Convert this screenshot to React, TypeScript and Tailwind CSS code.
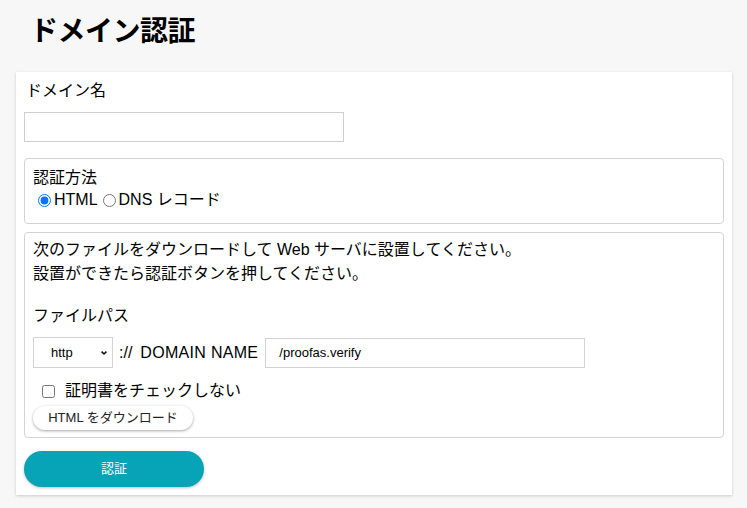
import { useState } from 'react';

const font = { fontFamily: '"Liberation Sans", "Noto Sans CJK JP", sans-serif' };

export default function App() {
  const [method, setMethod] = useState<'html' | 'dns'>('html');

  return (
    <div className="min-h-[508px] w-[747px] bg-[#f7f7f7] text-black" style={font}>
      <h1 className="pl-[30px] pt-[15px] pb-[23px] text-[28px] font-bold leading-[34px] tracking-[-0.5px]">
        ドメイン認証
      </h1>

      <div className="ml-4 mr-[15px] bg-white px-2 pt-[7px] pb-2 shadow-[0_1px_3px_rgba(0,0,0,0.18)]">
        <div className="pl-[2px] text-base leading-6">ドメイン名</div>
        <input
          type="text"
          className="mt-[9px] block h-[30px] w-[320px] border border-[#cfcfcf] px-2 text-sm outline-none"
        />

        {/* 認証方法 */}
        <fieldset className="mt-4 h-[66px] rounded border border-[#d3d3d3] px-2 pt-[9px]">
          <div className="text-base leading-5">認証方法</div>
          <div className="mt-[2px] flex items-center text-base leading-5">
            <label className="flex items-center">
              <input
                type="radio"
                name="method"
                checked={method === 'html'}
                onChange={() => setMethod('html')}
                className="ml-[5px] mr-[3px] h-[13px] w-[13px]"
              />
              HTML
            </label>
            <label className="flex items-center">
              <input
                type="radio"
                name="method"
                checked={method === 'dns'}
                onChange={() => setMethod('dns')}
                className="ml-[5px] mr-[3px] h-[13px] w-[13px]"
              />
              DNS レコード
            </label>
          </div>
        </fieldset>

        {/* HTML 認証 */}
        <fieldset className="mt-2 rounded border border-[#d3d3d3] px-2 pt-[5px] pb-[7px]">
          <p className="text-base leading-6">
            次のファイルをダウンロードして Web サーバに設置してください。
            <br />
            設置ができたら認証ボタンを押してください。
          </p>

          <div className="mt-[18px] text-base leading-6">ファイルパス</div>

          <div className="mt-[9px] flex items-center">
            <div className="relative">
              <select className="h-[31px] w-[80px] appearance-none border border-[#d3d3d3] bg-white pl-[17px] text-[13px] text-black outline-none">
                <option>http</option>
                <option>https</option>
              </select>
              <svg
                viewBox="0 0 10 10"
                className="pointer-events-none absolute right-[5px] top-[12px] h-[8px] w-[8px]"
              >
                <path d="M2 3.2 L5 6.2 L8 3.2" fill="none" stroke="#111" strokeWidth="2" />
              </svg>
            </div>
            <span className="ml-[6px] text-base">://</span>
            <span className="ml-[8px] text-base tracking-[0.3px]">DOMAIN NAME</span>
            <input
              type="text"
              defaultValue="/proofas.verify"
              className="ml-[7px] h-[30px] w-[320px] border border-[#d3d3d3] px-[13px] text-[13px] outline-none"
            />
          </div>

          <label className="mt-[11px] flex items-center text-base leading-6">
            <input type="checkbox" className="ml-[9px] mr-[10px] h-[13px] w-[13px]" />
            証明書をチェックしない
          </label>

          <button className="mt-[3px] h-[24px] w-[160px] rounded-full bg-white text-[13px] text-[#222] shadow-[0_1px_3px_rgba(0,0,0,0.35)]">
            HTML をダウンロード
          </button>
        </fieldset>

        <button className="mt-[13px] h-[36px] w-[180px] rounded-full bg-[#06a4b6] text-[13px] text-white shadow-[0_1px_3px_rgba(0,0,0,0.25)]">
          認証
        </button>
      </div>
    </div>
  );
}
